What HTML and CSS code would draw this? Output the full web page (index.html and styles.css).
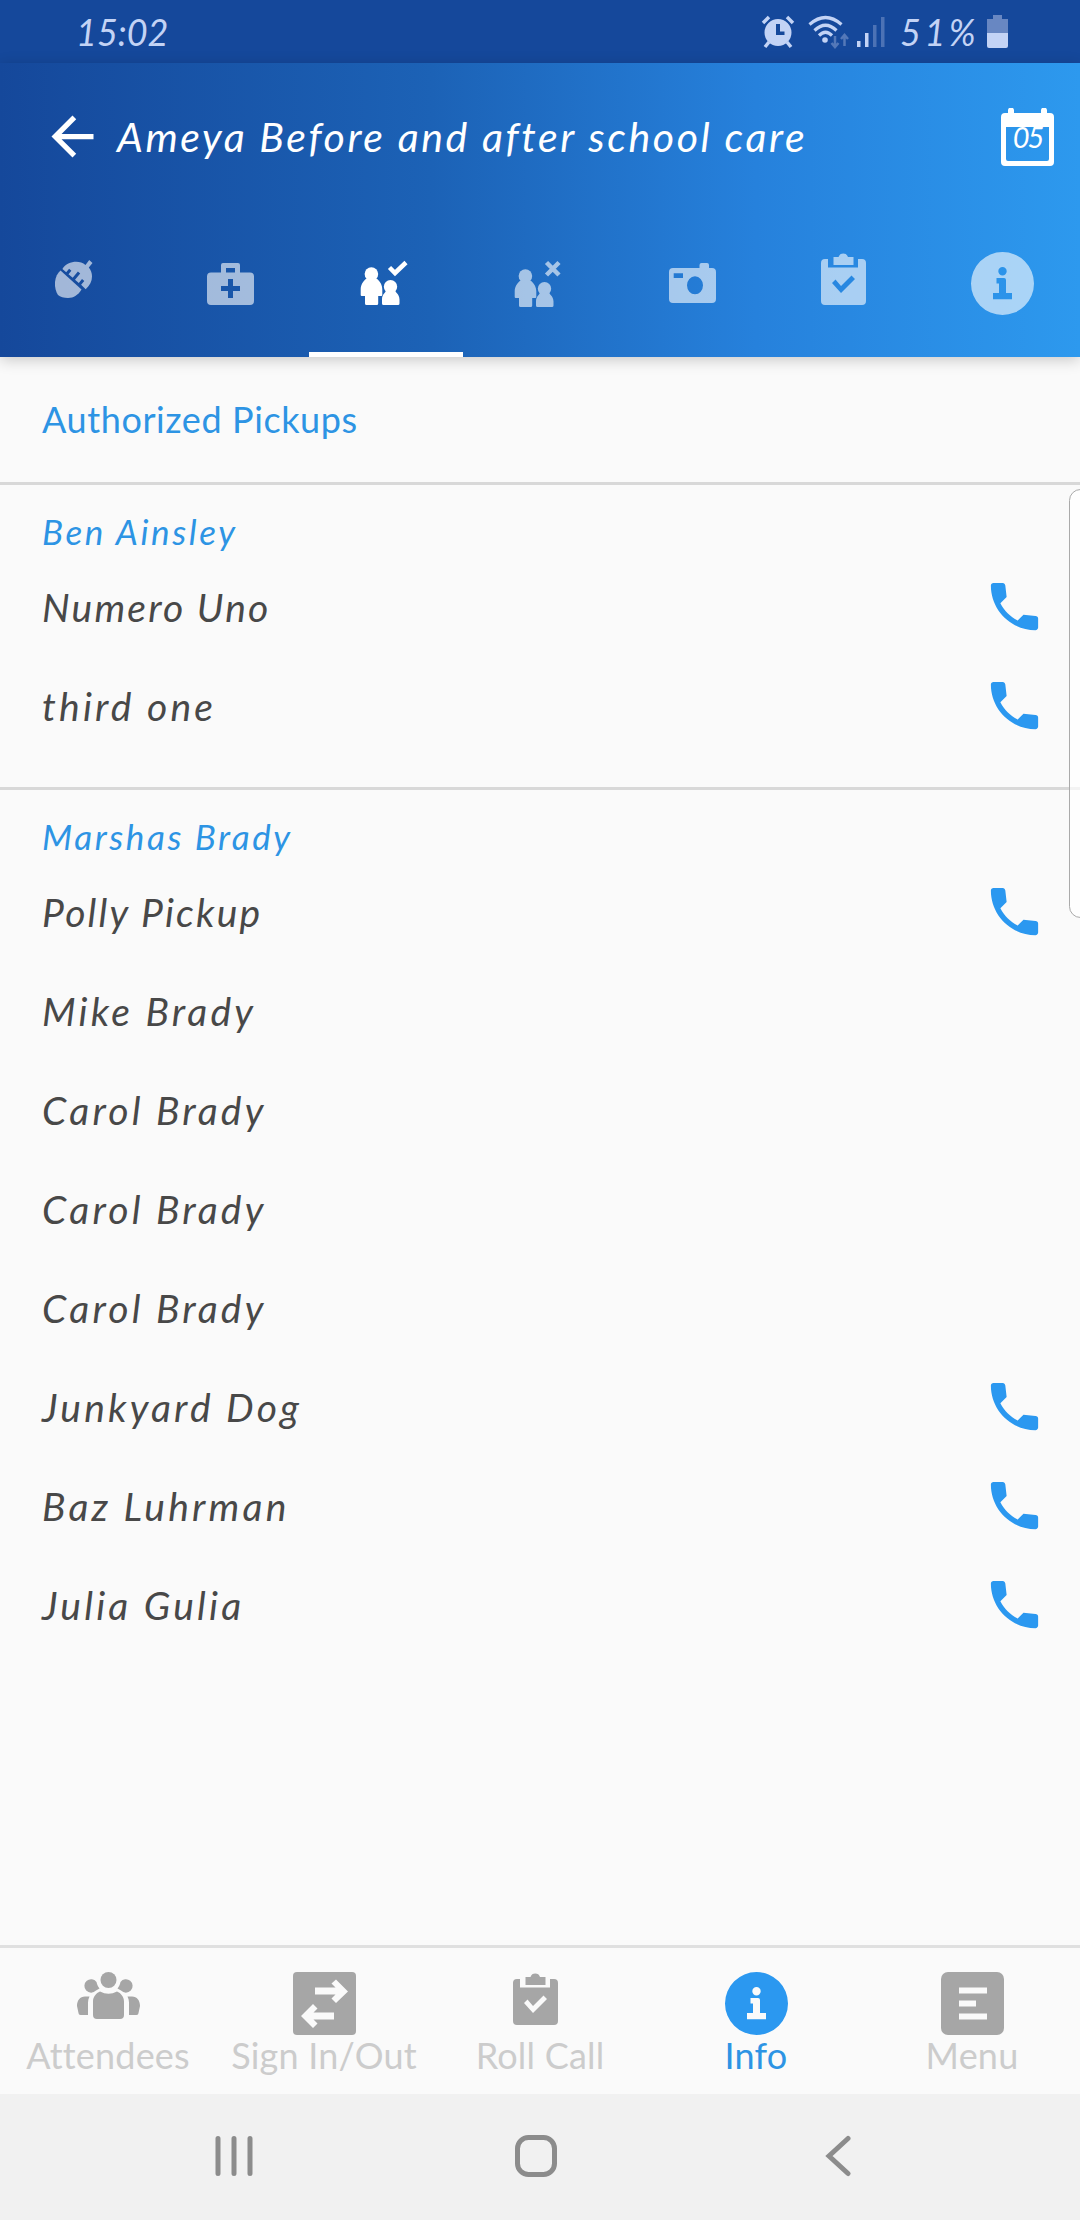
FILE: index.html
```html
<!DOCTYPE html>
<html lang="en">
<head>
    <meta charset="UTF-8">
    <meta name="viewport" content="width=device-width, initial-scale=1.0">
    <title>Authorized Pickups</title>
    <link rel="stylesheet" href="styles.css">
</head>
<body>
    <!-- Shared icons -->
    <svg class="sprite">
        <symbol id="phone" viewBox="0 0 24 24">
            <path d="M6.62 10.79c1.44 2.83 3.76 5.14 6.59 6.59l2.2-2.2 4.59.48c.6.1 1 .4 1 .9V20c0 .55-.45 1-1 1C10.61 21 3 13.39 3 4c0-.55.45-1 1-1h3.5c.55 0 .9.45 1 1l.5 4.4z"/>
        </symbol>
        <symbol id="clipboard" viewBox="0 0 63 63">
            <path fill-rule="evenodd" d="M8 7h3v8.5h30V7h4a4 4 0 0 1 4 4v38a4 4 0 0 1-4 4H8a4 4 0 0 1-4-4V11a4 4 0 0 1 4-4zM18.500 27.500L15 31l9 10 14-14-3.500-3.500L24 34z"/>
            <path d="M16.500 5h5a5 5 0 0 1 9.500 0h5.500v8h-20z"/>
        </symbol>
        <symbol id="info" viewBox="0 0 63 63">
            <path fill-rule="evenodd" d="M31.500 0a31.500 31.500 0 1 0 0 63 31.500 31.500 0 1 0 0-63zM31.500 15a4.200 4.200 0 1 1 0 8.400 4.200 4.200 0 1 1 0-8.400zM25.500 26H33a2 2 0 0 1 2 2v13h6v6.300H22V41h6v-9.500h-2.500z"/>
        </symbol>
        <symbol id="people" viewBox="0 0 63 63">
            <circle cx="17.400" cy="22" r="6.800"/>
            <path d="M12.500 26.500h10c3.500 2.500 5.800 6.500 5.800 11V43a1 1 0 0 1-1 1h-3.100v7.500A1.500 1.500 0 0 1 22.700 53H12.500a1.500 1.500 0 0 1-1.500-1.500V44H7.700a1 1 0 0 1-1-1v-5.500c0-4.500 2.300-8.500 5.800-11z"/>
            <circle cx="36.500" cy="34.700" r="6.700"/>
            <path d="M32.500 38h8.200c.2 2 4.800 4 4.800 9.500v4a1.500 1.500 0 0 1-1.500 1.500H29.500a1.500 1.500 0 0 1-1.500-1.500v-4c0-5.500 4.300-7.500 4.500-9.500z"/>
        </symbol>
    </svg>

    <div class="screen">
        <div class="status-bar">
            <span class="time">15:02</span>
            <div class="status-icons">
                <svg class="alarm" viewBox="0 0 34 34">
                    <path fill-rule="evenodd" d="M17 4a13.500 13.500 0 1 0 0 27 13.500 13.500 0 1 0 0-27zM15 9v11h8.500v-3.500H19V9z"/>
                    <path d="M2 8l6-6M26 2l6 6M8 27l-4 5M26 27l4 5" fill="none" stroke="#c3d3f5" stroke-width="3.500"/>
                </svg>
                <svg class="wifi" viewBox="0 0 41 34">
                    <g fill="none" stroke="#c3d3f5" stroke-width="3.200">
                        <path d="M1.500 9.500Q17.500-4.500 33.500 9.500"/>
                        <path d="M6.500 15.500Q17.500 5 28.500 15.500"/>
                        <path d="M11 20.500Q17.500 14 24 20.500"/>
                    </g>
                    <circle cx="17" cy="25" r="2.800"/>
                    <path d="M27 21v11M23.500 28l3.500 4 3.500-4M36.500 31V20M33 24l3.500-4 3.500 4" fill="none" stroke="#5478b8" stroke-width="2.500"/>
                </svg>
                <svg class="signal" viewBox="0 0 28 30">
                    <path d="M0 24h3.500v6H0zM8 16h3.500v14H8z"/>
                    <path fill="#4c72b5" d="M16 8h3.500v22H16zM24 0h3.500v30H24z"/>
                </svg>
                <span class="percent">51%</span>
                <svg class="battery" viewBox="0 0 21 33">
                    <path fill="#6887c2" d="M6 0h9v4h6v14H0V4h6z"/>
                    <path d="M0 18h21v13a2 2 0 0 1-2 2H2a2 2 0 0 1-2-2z"/>
                </svg>
            </div>
        </div>

        <div class="header">
            <div class="title-row">
                <svg class="back" viewBox="0 0 24 24">
                    <path d="M20 11H7.830l5.590-5.590L12 4l-8 8 8 8 1.410-1.410L7.830 13H20v-2z"/>
                </svg>
                <h1>Ameya Before and after school care</h1>
                <div class="calendar">
                    <svg viewBox="0 0 53 58">
                        <path fill-rule="evenodd" d="M4 5h3V2.500a3 3 0 0 1 6 0V5h27V2.500a3 3 0 0 1 6 0V5h3a4 4 0 0 1 4 4v45a4 4 0 0 1-4 4H4a4 4 0 0 1-4-4V9a4 4 0 0 1 4-4zM5 19v32a2 2 0 0 0 2 2h39a2 2 0 0 0 2-2V19z"/>
                    </svg>
                    <span class="day">05</span>
                </div>
            </div>
            <div class="tabs">
                <div class="tab">
                    <svg viewBox="0 0 63 63">
                        <path d="M14.500 18.500L35.500 37.500C32 43 28 46 22 46c-4 0-8-1-10-3-2-3-3.500-8-3-13 .5-5 2.500-9 5.500-11.500z"/>
                        <path d="M16.400 17C21 9.500 33 7.500 39.500 13l3.700-5 3.300 3-3.700 4.500c5.200 6.500 4 15.500-3.100 21.700l-4.600-4.400 3.200-3.800-2.300-1.900-3.200 3.800-3.800-3.200 5.200-6.100-2.300-2-5.200 6.100-4.200-3.500 2.900-3.400-2.300-2-2.900 3.400z"/>
                    </svg>
                </div>
                <div class="tab">
                    <svg viewBox="0 0 63 63">
                        <path fill-rule="evenodd" d="M11 20.500h10V13a2 2 0 0 1 2-2h15a2 2 0 0 1 2 2v7.500h10a4 4 0 0 1 4 4V49a4 4 0 0 1-4 4H11a4 4 0 0 1-4-4V24.500a4 4 0 0 1 4-4zM26 16v4.500h9V16zM28 27v7h-7v5h7v7h5v-7h7v-5h-7v-7z"/>
                    </svg>
                </div>
                <div class="tab active">
                    <svg viewBox="0 0 63 63">
                        <use href="#people"/>
                        <path d="M35.500 15.500l5.500 5.500L52 10.500" fill="none" stroke="#fff" stroke-width="4.500"/>
                    </svg>
                </div>
                <div class="tab">
                    <svg viewBox="0 0 63 63">
                        <use href="#people" y="2"/>
                        <path d="M38.500 10.500l12.500 12.500M51 10.500L38.500 23" fill="none" stroke="#fff" stroke-width="4.500"/>
                    </svg>
                </div>
                <div class="tab">
                    <svg viewBox="0 0 63 63">
                        <path fill-rule="evenodd" d="M10 16h26.500v-3a2 2 0 0 1 2-2h5.500a2 2 0 0 1 2 2v3h3a4 4 0 0 1 4 4v27a4 4 0 0 1-4 4H10a4 4 0 0 1-4-4V20a4 4 0 0 1 4-4zM10.700 21.300V26H20v-4.700zM32 24.300a8 9 0 1 0 0 18 8 9 0 1 0 0-18z"/>
                    </svg>
                </div>
                <div class="tab">
                    <svg><use href="#clipboard"/></svg>
                </div>
                <div class="tab">
                    <svg><use href="#info"/></svg>
                </div>
            </div>
        </div>

        <div class="content">
            <div class="page-title">Authorized Pickups</div>

            <div class="group">
                <h2>Ben Ainsley</h2>
                <div class="row"><span class="tight">Numero Uno</span><svg><use href="#phone"/></svg></div>
                <div class="row"><span>third one</span><svg><use href="#phone"/></svg></div>
            </div>

            <div class="group">
                <h2>Marshas Brady</h2>
                <div class="row"><span class="tight">Polly Pickup</span><svg><use href="#phone"/></svg></div>
                <div class="row"><span>Mike Brady</span></div>
                <div class="row"><span>Carol Brady</span></div>
                <div class="row"><span>Carol Brady</span></div>
                <div class="row"><span>Carol Brady</span></div>
                <div class="row"><span>Junkyard Dog</span><svg><use href="#phone"/></svg></div>
                <div class="row"><span>Baz Luhrman</span><svg><use href="#phone"/></svg></div>
                <div class="row"><span>Julia Gulia</span><svg><use href="#phone"/></svg></div>
            </div>
            <div class="edge-handle"></div>
        </div>

        <div class="bottom-bar">
            <div class="item">
                <svg viewBox="0 0 63 63">
                    <circle cx="31.500" cy="8" r="8"/>
                    <path d="M23 19.500q8.500 4.500 17 0c4 1.500 7 5.500 7 10V43a4 4 0 0 1-4 4H20a4 4 0 0 1-4-4V29.500c0-4.500 3-8.500 7-10z"/>
                    <path d="M19 18.500a6.700 6.700 0 1 1 .5-8.500c.5 2.500 1.500 4.500 3 6.500zM44 18.500a6.700 6.700 0 1 0-.5-8.500c-.5 2.500-1.500 4.500-3 6.500z"/>
                    <path d="M12.500 24.500c-1 2-1.500 4-1.500 6V43H3.500a2 2 0 0 1-2-2L0 34c0-5.500 3-9.500 8-9.500zM50.500 24.500c1 2 1.500 4 1.500 6V43h7.500a2 2 0 0 0 2-2L63 34c0-5.500-3-9.500-8-9.500z"/>
                </svg>
                <span>Attendees</span>
            </div>
            <div class="item">
                <svg viewBox="0 0 63 63">
                    <rect width="63" height="63" rx="4"/>
                    <path fill="#fafafa" d="M22 15.500h20.500l-4-4L43 7.500 55 19.500 43 31l-4.500-4.500 4-4H22zM41 40.500H20.500l4-4L20 32 8 44l12 12 4.500-4.500-4-4H41z"/>
                </svg>
                <span>Sign In/Out</span>
            </div>
            <div class="item">
                <svg><use href="#clipboard"/></svg>
                <span>Roll Call</span>
            </div>
            <div class="item active">
                <svg><use href="#info"/></svg>
                <span>Info</span>
            </div>
            <div class="item">
                <svg viewBox="0 0 63 63">
                    <rect width="63" height="63" rx="7"/>
                    <path fill="#fafafa" d="M18 15.500h28v6H18zM18 28.500h17v6H18zM18 41.500h28v6H18z"/>
                </svg>
                <span>Menu</span>
            </div>
        </div>

        <div class="nav-bar">
            <svg viewBox="0 0 44 44"><path d="M6 3.500v35M22 3.500v35M38 3.500v35"/></svg>
            <svg viewBox="0 0 44 44"><rect x="3.500" y="2.500" width="37" height="37" rx="11"/></svg>
            <svg viewBox="0 0 44 44"><path d="M32 3.500L13 21l19 17.500"/></svg>
        </div>
    </div>
</body>
</html>
```

FILE: styles.css
```css
* {
    box-sizing: border-box;
}
body {
    margin: 0;
    font-family: 'Lato', sans-serif;
    background: #fafafa;
    color: #484848;
}
h1, h2 {
    margin: 0;
    font-weight: normal;
}
svg {
    display: block;
    flex-shrink: 0;
    fill: currentColor;
}
.sprite {
    display: none;
}
.screen {
    width: 1080px;
    height: 2220px;
    display: flex;
    flex-direction: column;
    overflow: hidden;
}

/* Status bar */
.status-bar {
    height: 63px;
    padding: 0 72px 0 76px;
    display: flex;
    align-items: center;
    justify-content: space-between;
    background: #15489b;
    color: #c3d3f5;
    font-size: 36px;
    font-style: italic;
}
.status-icons {
    display: flex;
    align-items: center;
}
.alarm {
    width: 34px;
    height: 34px;
    margin-right: 13px;
}
.wifi {
    width: 41px;
    height: 34px;
    margin-right: 8px;
}
.signal {
    width: 28px;
    height: 30px;
    margin-right: 15px;
}
.percent {
    width: 87px;
    letter-spacing: 3.5px;
}
.battery {
    width: 21px;
    height: 33px;
}

/* Header */
.header {
    height: 294px;
    background: linear-gradient(to right, #15489b, #1c62b6 40%, #2681dc 70%, #2d99ee);
    color: #fff;
    box-shadow: 0 3px 14px rgba(0, 0, 0, 0.2);
    position: relative;
}
.title-row {
    height: 147px;
    padding: 0 26px 0 41px;
    display: flex;
    align-items: center;
}
.back {
    width: 63px;
    height: 63px;
    margin-right: 13px;
}
h1 {
    flex: 1;
    font-size: 41px;
    font-style: italic;
    letter-spacing: 2.6px;
    white-space: nowrap;
}
.calendar {
    position: relative;
    width: 53px;
    height: 58px;
}
.calendar svg {
    width: 53px;
    height: 58px;
}
.day {
    position: absolute;
    left: 0;
    right: 0;
    top: 11px;
    text-align: center;
    font-size: 29px;
    font-style: italic;
    letter-spacing: -2px;
}
.tabs {
    display: grid;
    grid-template-columns: repeat(7, 1fr);
    height: 147px;
}
.tab {
    display: flex;
    align-items: center;
    justify-content: center;
}
.tab svg {
    width: 63px;
    height: 63px;
    opacity: 0.6;
}
.tab.active {
    box-shadow: inset 0 -5px #fff;
}
.tab.active svg {
    opacity: 1;
}

/* Pickup list */
.content {
    position: relative;
    flex: 1;
}
.page-title {
    height: 125px;
    padding-left: 42px;
    line-height: 125px;
    font-size: 36px;
    letter-spacing: 0.6px;
    color: #2d94e4;
}
.group {
    border-top: 3px solid #d8d8d8;
    padding: 0 34px 32px 42px;
}
h2 {
    height: 72px;
    padding-top: 25px;
    line-height: 42px;
    font-size: 35px;
    font-style: italic;
    letter-spacing: 2.6px;
    color: #2d94e4;
}
.row {
    height: 99px;
    display: flex;
    align-items: center;
    justify-content: space-between;
    font-size: 39px;
    font-style: italic;
    letter-spacing: 3.2px;
}
.row .tight {
    letter-spacing: 2.2px;
}
.row svg {
    width: 63px;
    height: 63px;
    color: #2b98f0;
}
.edge-handle {
    position: absolute;
    top: 132px;
    right: -12px;
    width: 23px;
    height: 429px;
    border: 1px solid #aaa;
    border-radius: 12px;
    background: rgba(255, 255, 255, 0.7);
}

/* Bottom navigation */
.bottom-bar {
    height: 149px;
    padding-top: 24px;
    border-top: 3px solid #e0e0e0;
    display: grid;
    grid-template-columns: repeat(5, 1fr);
}
.item {
    display: flex;
    flex-direction: column;
    align-items: center;
    color: #a6a6a6;
}
.item svg {
    width: 63px;
    height: 63px;
}
.item span {
    font-size: 36px;
    line-height: 40px;
    letter-spacing: 0.2px;
    color: #ccc;
}
.item.active {
    color: #2b98f0;
}
.item.active span {
    color: #2d94e4;
}

/* System navigation */
.nav-bar {
    height: 126px;
    padding: 0 91px 0 83px;
    display: grid;
    grid-template-columns: repeat(3, 1fr);
    align-items: center;
    justify-items: center;
    background: #f1f1f1;
}
.nav-bar svg {
    width: 44px;
    height: 44px;
    fill: none;
    stroke: #8c8c8c;
    stroke-width: 5;
    stroke-linecap: round;
}
```
